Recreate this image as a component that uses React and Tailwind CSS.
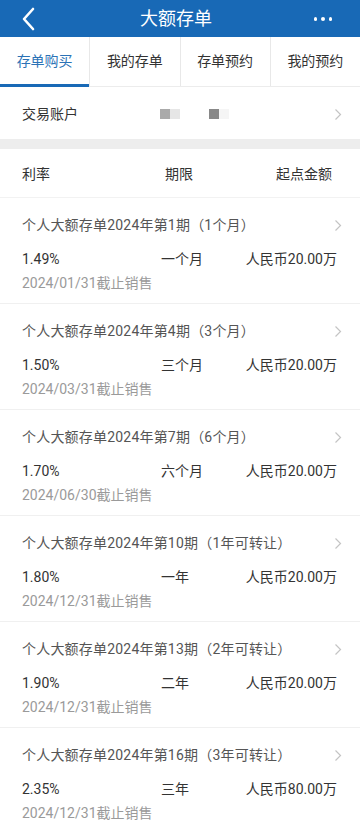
const products = [
  { title: '个人大额存单2024年第1期（1个月）', rate: '1.49%', term: '一个月', amount: '人民币20.00万', end: '2024/01/31截止销售' },
  { title: '个人大额存单2024年第4期（3个月）', rate: '1.50%', term: '三个月', amount: '人民币20.00万', end: '2024/03/31截止销售' },
  { title: '个人大额存单2024年第7期（6个月）', rate: '1.70%', term: '六个月', amount: '人民币20.00万', end: '2024/06/30截止销售' },
  { title: '个人大额存单2024年第10期（1年可转让）', rate: '1.80%', term: '一年', amount: '人民币20.00万', end: '2024/12/31截止销售' },
  { title: '个人大额存单2024年第13期（2年可转让）', rate: '1.90%', term: '二年', amount: '人民币20.00万', end: '2024/12/31截止销售' },
  { title: '个人大额存单2024年第16期（3年可转让）', rate: '2.35%', term: '三年', amount: '人民币80.00万', end: '2024/12/31截止销售' },
];

const tabs = ['存单购买', '我的存单', '存单预约', '我的预约'];

const Arrow = () => (
  <svg width="8" height="13" viewBox="0 0 8 13" className="shrink-0">
    <path d="M1.5 1.5 L6.5 6.5 L1.5 11.5" fill="none" stroke="#c4c4c4" strokeWidth="1.2" />
  </svg>
);

export default function App() {
  return (
    <div
      className="w-[360px] h-[828px] overflow-hidden bg-white"
      style={{ fontFamily: "Roboto, 'Noto Sans CJK SC', sans-serif" }}
    >
      {/* 顶部导航 */}
      <div className="h-[37px] bg-[#1869b6] flex items-center justify-between px-[20px]">
        <svg width="18" height="24" viewBox="0 0 18 24">
          <path d="M13 2 L4 12 L13 22" fill="none" stroke="#fff" strokeWidth="2.6" strokeLinecap="round" strokeLinejoin="round" />
        </svg>
        <div className="text-white text-[18px] leading-none">大额存单</div>
        <div className="flex gap-[4px] w-[18px] mr-[8px] items-center">
          <span className="w-[4px] h-[4px] rounded-full bg-white" />
          <span className="w-[4px] h-[4px] rounded-full bg-white" />
          <span className="w-[4px] h-[4px] rounded-full bg-white" />
        </div>
      </div>

      {/* 标签 */}
      <div className="flex h-[50px] border-b border-[#ececec]">
        {tabs.map((t, i) => (
          <div
            key={t}
            className={`flex-1 flex items-center justify-center text-[14px] relative ${i > 0 ? 'border-l border-[#e8e8e8]' : ''} ${i === 0 ? 'text-[#2b72b6]' : 'text-[#333]'}`}
          >
            {t}
            {i === 0 && <div className="absolute left-0 right-0 bottom-[-1px] h-[3px] bg-[#1869b6]" />}
          </div>
        ))}
      </div>

      {/* 交易账户 */}
      <div className="h-[52px] flex items-center pt-[2px] px-[22px] text-[14px] text-[#333]">
        <span className="w-[138px]">交易账户</span>
        <div className="flex items-center">
          <span className="w-[10px] h-[10px] bg-[#aaaaaa]" />
          <span className="w-[10px] h-[10px] bg-[#e6e6e6]" />
          <span className="w-[29px]" />
          <span className="w-[10px] h-[10px] bg-[#888888]" />
          <span className="w-[10px] h-[10px] bg-[#f5f5f5]" />
        </div>
        <div className="ml-auto mr-[-4px]"><Arrow /></div>
      </div>
      <div className="h-[10px] bg-[#ededed]" />

      {/* 表头 */}
      <div className="h-[49px] flex items-center pt-[2px] px-[22px] text-[14px] text-[#333] border-b border-[#f2f2f2]">
        <span className="w-[143px]">利率</span>
        <span>期限</span>
        <span className="ml-auto mr-[6px]">起点金额</span>
      </div>

      {/* 列表 */}
      {products.map((p) => (
        <div key={p.title} className="px-[22px] pt-[17px] pb-[10px] border-b border-[#f0f0f0] text-[14px]">
          <div className="flex items-center h-[20px] text-[#555]">
            <span className="tracking-[0.2px]">{p.title}</span>
            <div className="ml-auto mr-[-4px]"><Arrow /></div>
          </div>
          <div className="flex items-center h-[20px] mt-[14px] text-[#333]">
            <span className="w-[139px]">{p.rate}</span>
            <span>{p.term}</span>
            <span className="ml-auto mr-[1px]">{p.amount}</span>
          </div>
          <div className="h-[20px] mt-[4px] leading-[20px] text-[#9a9a9a]">{p.end}</div>
        </div>
      ))}
    </div>
  );
}
